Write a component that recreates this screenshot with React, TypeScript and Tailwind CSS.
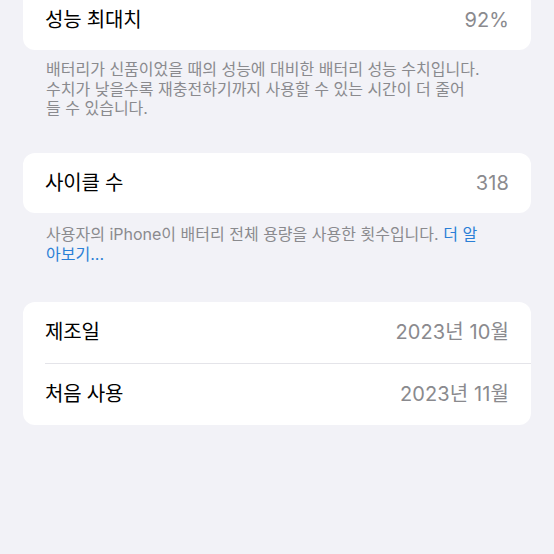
import React from "react";

const font = { fontFamily: "Inter, 'Noto Sans CJK KR', 'Noto Sans', sans-serif" };

function Row({ label, value }: { label: string; value: string }) {
  return (
    <div className="flex items-center justify-between h-full px-[22px]">
      <span className="text-[20px] text-black tracking-[-0.2px]">{label}</span>
      <span className="text-[20px] text-[#8a8a8e] tracking-[0.1px]">{value}</span>
    </div>
  );
}

export default function App() {
  return (
    <div className="w-[554px] h-[554px] overflow-hidden bg-[#f2f2f7]" style={font}>
      <div className="flex flex-col px-[23px]">
        <div className="-mt-[10px] h-[60px] bg-white rounded-[12px]">
          <Row label="성능 최대치" value="92%" />
        </div>
        <div className="pt-[10px] pl-[23px] text-[16px] leading-[19.5px] text-[#8a8a8e] whitespace-nowrap">
          <div>배터리가 신품이었을 때의 성능에 대비한 배터리 성능 수치입니다.</div>
          <div>수치가 낮을수록 재충전하기까지 사용할 수 있는 시간이 더 줄어</div>
          <div>들 수 있습니다.</div>
        </div>
        <div className="mt-[34px] h-[60px] bg-white rounded-[12px]">
          <Row label="사이클 수" value="318" />
        </div>
        <div className="pt-[11px] pl-[23px] text-[16px] leading-[20px] text-[#8a8a8e] whitespace-nowrap">
          <div>
            사용자의 iPhone이 배터리 전체 용량을 사용한 횟수입니다.{" "}
            <span className="text-[#2a7fd6]">더 알</span>
          </div>
          <div className="text-[#2a7fd6]">아보기...</div>
        </div>
        <div className="mt-[38px] bg-white rounded-[12px] flex flex-col">
          <div className="h-[61px]">
            <Row label="제조일" value="2023년 10월" />
          </div>
          <div className="ml-[22px] h-px bg-[#e4e4e9]" />
          <div className="h-[61px]">
            <Row label="처음 사용" value="2023년 11월" />
          </div>
        </div>
      </div>
    </div>
  );
}
